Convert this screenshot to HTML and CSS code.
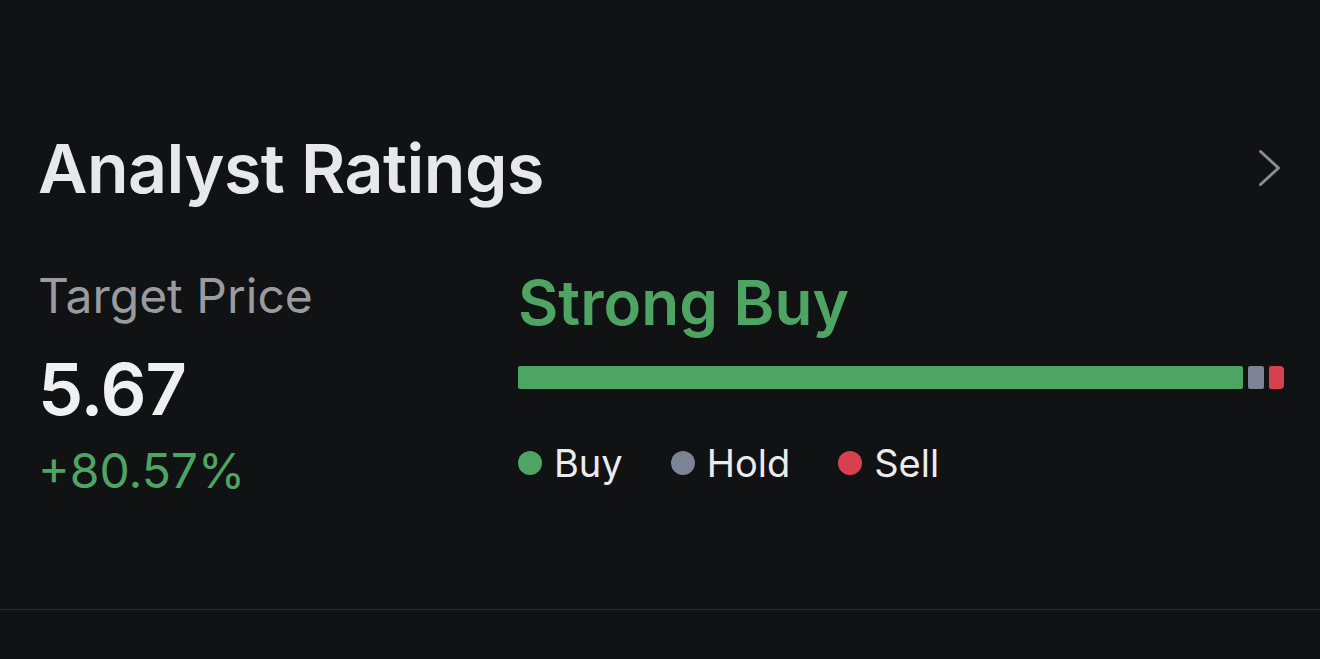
FILE: index.html
```html
<!DOCTYPE html>
<html lang="en">
<head>
    <meta charset="UTF-8">
    <meta name="viewport" content="width=device-width, initial-scale=1.0">
    <title>Analyst Ratings</title>
    <link rel="stylesheet" href="styles.css">
</head>
<body>
    <div class="ratings-card">
        <!-- Başlık -->
        <div class="card-header">
            <h2 class="card-title">Analyst Ratings</h2>
            <svg class="chevron" width="24" height="38" viewBox="0 0 24 38">
                <path d="M2.5 2.5 L20.5 19 L2.5 35.5" fill="none" stroke="#8b8c8f" stroke-width="3" stroke-linecap="round" stroke-linejoin="round"/>
            </svg>
        </div>

        <div class="card-body">
            <!-- Hedef fiyat -->
            <div class="target">
                <div class="target-label">Target Price</div>
                <div class="target-value">5.67</div>
                <div class="target-change">+80.57%</div>
            </div>

            <!-- Derecelendirme -->
            <div class="rating">
                <div class="rating-title">Strong Buy</div>
                <div class="rating-bar">
                    <div class="seg seg-buy"></div>
                    <div class="seg seg-hold"></div>
                    <div class="seg seg-sell"></div>
                </div>
                <div class="legend">
                    <span class="legend-item"><i class="dot dot-buy"></i>Buy</span>
                    <span class="legend-item"><i class="dot dot-hold"></i>Hold</span>
                    <span class="legend-item"><i class="dot dot-sell"></i>Sell</span>
                </div>
            </div>
        </div>
    </div>
</body>
</html>
```

FILE: styles.css
```css
body {
    margin: 0;
    padding: 0;
    background: #111214;
    color: #e8e8ea;
    font-family: 'Inter', 'Noto Sans', sans-serif;
}

/* Kart */
.ratings-card {
    padding: 128px 36px 0 38px;
    height: 481px;
    border-bottom: 1px solid #2a2b2e;
}

/* Başlık */
.card-header {
    display: flex;
    justify-content: space-between;
    align-items: center;
}

.card-title {
    margin: 0;
    font-size: 68px;
    font-weight: 600;
    line-height: 80px;
    letter-spacing: -0.5px;
    color: #e8e8ea;
}

.chevron {
    margin-right: 2px;
}

/* Gövde */
.card-body {
    display: grid;
    grid-template-columns: 480px 1fr;
    margin-top: 58px;
}

.target-label {
    font-size: 48px;
    line-height: 60px;
    color: #9a9b9e;
}

.target-value {
    font-size: 72px;
    font-weight: 600;
    line-height: 86px;
    letter-spacing: -1px;
    color: #f0f0f2;
    margin-top: 20px;
}

.target-change {
    font-size: 48px;
    line-height: 60px;
    color: #4ea563;
    margin-top: 9px;
}

.rating-title {
    font-size: 62px;
    font-weight: 600;
    line-height: 70px;
    color: #4ea563;
    margin-top: 2px;
}

.rating-bar {
    display: flex;
    gap: 5px;
    height: 23px;
    margin-top: 28px;
}

.seg {
    border-radius: 2px;
}

.seg-buy {
    flex: 1;
    background: #4ea563;
}

.seg-hold {
    width: 16px;
    background: #7b8395;
}

.seg-sell {
    width: 15px;
    background: #d6404f;
    border-radius: 2px 4px 4px 2px;
}

/* Açıklama */
.legend {
    display: flex;
    gap: 48px;
    margin-top: 51px;
    font-size: 38px;
    line-height: 46px;
    color: #ececee;
}

.legend-item {
    display: flex;
    align-items: center;
    gap: 12px;
}

.dot {
    width: 24px;
    height: 24px;
    border-radius: 50%;
}

.dot-buy { background: #4ea563; }
.dot-hold { background: #7b8395; }
.dot-sell { background: #d6404f; }
```
